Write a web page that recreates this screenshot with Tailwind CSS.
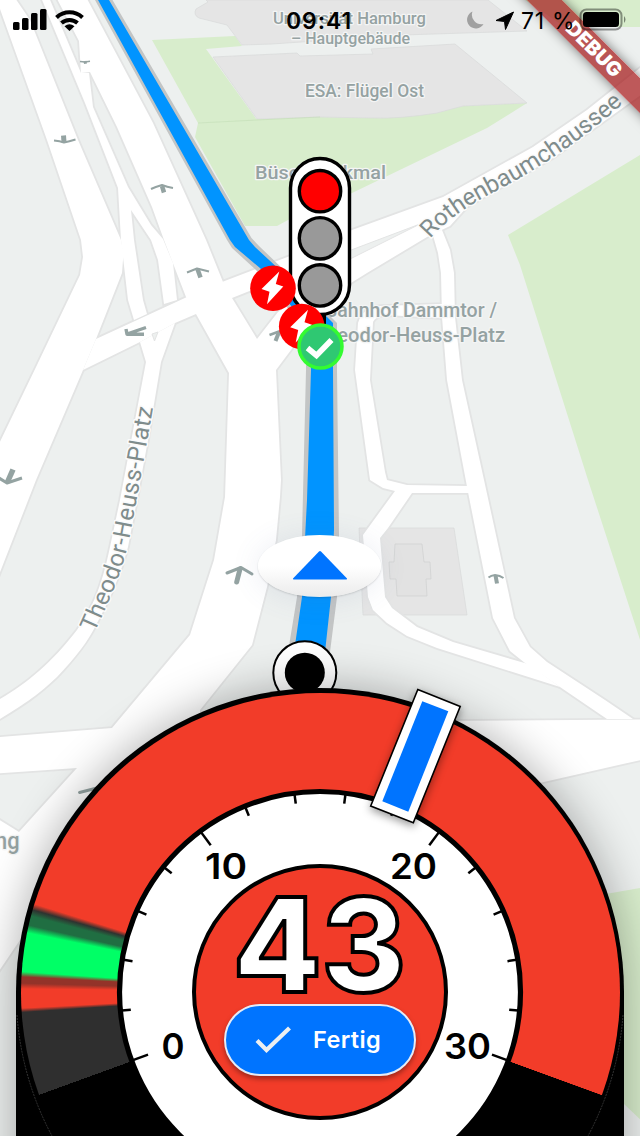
<!DOCTYPE html>
<html lang="de">
<head>
<meta charset="utf-8">
<title>Navigation</title>
<script src="https://cdn.jsdelivr.net/npm/@tailwindcss/browser@4"></script>
</head>
<body class="bg-[#edefef]">
<main class="relative h-[1136px] w-[640px] overflow-hidden bg-[#edf0ef] font-['Inter',sans-serif]">

  <!-- Map -->
  <svg class="absolute inset-0" width="640" height="1136" viewBox="0 0 640 1136">
    <defs>
      <g id="roads">
        <polygon points="-5,-5 13,-5 30,20 78,140 121,240 123.500,253 122,273 96,339 83,370 36,480 -5,585 -5,452 37,365 80,275 83,257 81,240 47,140"/>
        <polygon points="96,339 187,297 222,282 290,256 352,230 443,197 533,147 587,110 645,64 645,92 553,158 467,207 450,226 427,237 367,273 330,296 296,296 252,290 232,298 196,314 175,323 140,342 83,370"/>
        <polygon points="40,-5 48,-5 81,73 89,73 93,107 128,187 151,225 163,239 173,263 177,300 164,304 158,260 151,240 131,210 134,240 143,300 147,314 134,320 128,300 121,240 118,188 85,103"/>
        <polygon points="55,-5 79,41 81,73 90,72 117,127 152,207 164,240 186,297 196,314 229,373 225,497 214,560 190,635 112,728 -5,737.500 -5,773.500 77,768 19,832 -5,817 -5,977 20,940 200,900 200,710 252,645 267,587 276,540 280,497 281,480 276,370 300,338 310,290 278,312 257,339 232,298 223,282 206,240 153,123 85,-5"/>
        <path d="M140,342 146,362 120,500 110,547 C101,590 92,608 77,630 C50,665 25,685 -5,702 L-5,722 C25,704 38,695 57,677 C75,658 88,642 97,623 C108,603 119,580 128,547 L137,500 148,440 161,362 175,323Z"/>
        <polygon points="432,232 438,253 441,273 442,317 447,380 468,492 493,618 510,651 525,663 560,687 607,719 633,719 605,700 547,662 530,647 514,618 484,480 462,380 455,317 454,273 450,250 442,230"/>
        <path d="M358,323 355,370 370,480 383,488 395,491 363,535 368,597 373,610 387,623 407,636 437,648 560,687 528,664 453,642 417,627 392,608 385,597 380,538 388,528 412,493 470,493 468,486 407,485 387,480 385,472 370,380 373,322 Q375,317 384,315 L442,318 442,304 380,306 Q362,308 358,323Z"/>
        <polygon points="440,721 645,719.500 645,759 535,784 440,800"/>
      </g>
    </defs>

    <g fill="#d8edcc">
      <polygon points="152,40 235,36 242,46 206,49 257,120 198,123"/>
      <polygon points="198,123 257,119 320,117 373,118 437,111 463,106 527,103 487,128 352,193 288,220 277,226 245,226 195,137"/>
      <polygon points="508,235 645,152 645,655 588,480 520,265"/>
      <polygon points="525,0 640,0 640,27 565,27"/>
      <polygon points="600,895 645,887 645,1124 624,1104 600,1090"/>
    </g>
    <g fill="#e5e5e5" stroke="#d9dada" stroke-width=".7">
      <path d="M206,0 208,2 196,9 Q193,15 199,18 L227,25 242,45 272,44 403,35 527,31 488,0Z"/>
      <path d="M213,57 297,53 300,56 373,54 371,49 455,44 527,103 463,106 437,113 Q400,119 373,118 L320,117 257,119Z"/>
      <path d="M359,528 454,528 467,615 363,615Z"/>
      <path fill="#e2e2e2" stroke="#cfd0d0" d="M395,544 422,544 424,562 430,562 431,579 426,579 427,596 397,596 396,579 390,579 389,562 394,562Z"/>
    </g>
    <path d="M198,123 257,120 320,117" fill="none" stroke="#c5dfb9" stroke-width=".7"/>

    <use href="#roads" fill="#e3e4e4" stroke="#e3e4e4" stroke-width="3.600"/>
    <use href="#roads" fill="#fff"/>
    <polygon points="330,258 420,224 352,258 330,270" fill="#edf0ef" stroke="#e3e4e4"/>
    <path d="M152,334 158,332 154.500,341Z" fill="#edf0ef" stroke="#e3e4e4"/>

    <!-- One-way arrows -->
    <g fill="none" stroke="#94a3a2" stroke-linejoin="round">
      <path stroke-width="2" d="M54,140.500Q60,141 64,142.500Q69,141.500 75.500,139.500"/><path stroke-width="5" d="M63.500,135.500 64,142"/>
      <path stroke-width="1.400" d="M80,61.500 85,62 90,61.200"/><path stroke-width="3" d="M85,61 85.500,63.800"/>
      <path stroke-width="2" d="M151,189Q155,187 162,185Q167,187 173,188"/><path stroke-width="4.500" d="M164,192.500 162,186"/>
      <path stroke-width="2" d="M187,272.500 197,268.500 209,271.500"/><path stroke-width="4.500" d="M200.500,277.500 197.500,269"/>
      <path stroke-width="3.400" d="M126,329 127,334.300 144,334.300M127,334 146,327.500"/>
      <path stroke-width="2.600" d="M269.500,335 279,331.500 290,333"/><path stroke-width="4" d="M279,332 275.500,341"/>
      <path stroke-width="3" d="M-1,478 7,483 22,478"/><path stroke-width="5.500" d="M13,469.500 7.500,482"/>
      <path stroke-width="3" stroke-linecap="round" d="M227,573 241,567.500 252,574"/><path stroke-width="5" stroke-linecap="round" d="M236.700,582 240,569"/>
      <path stroke-width="2" d="M488.500,577.500Q491,575.500 495,575Q500,575.500 503.500,578"/><path stroke-width="4" d="M497,583.500 495.500,575.500"/>
      <path stroke-width="3" stroke-linecap="round" d="M79.500,792.500 97,788"/>
    </g>

    <!-- Map labels -->
    <g fill="#95a2a2" stroke="#f4f5f5" stroke-width="2.500" paint-order="stroke" stroke-linejoin="round" font-family="Roboto, sans-serif" font-size="16.500" font-weight="500">
      <text x="273" y="24" textLength="153" lengthAdjust="spacingAndGlyphs">Universität Hamburg</text>
      <text x="291" y="44" textLength="119" lengthAdjust="spacingAndGlyphs">– Hauptgebäude</text>
      <text x="305" y="97" font-size="17.500" textLength="119" lengthAdjust="spacingAndGlyphs">ESA: Flügel Ost</text>
      <text x="255" y="179" font-size="17.500" textLength="131" lengthAdjust="spacingAndGlyphs">Büschdenkmal</text>
      <text x="325" y="317" font-size="19.500" textLength="172" lengthAdjust="spacingAndGlyphs">Bahnhof Dammtor /</text>
      <text x="314" y="341.500" font-size="19.500" textLength="191" lengthAdjust="spacingAndGlyphs">Theodor-Heuss-Platz</text>
      <text x="-5" y="849" font-size="24" textLength="24.500" lengthAdjust="spacingAndGlyphs">ng</text>
    </g>
    <path id="rothen" fill="none" d="M430,239 C447,219 467,206 502,188 C546,164 586,137 627,100"/>
    <path id="heuss" fill="none" d="M94.500,633 C108,602 122,575 129,540 C137,498 145,455 154,402"/>
    <g fill="#7f8c8c" stroke="#fbfbfb" stroke-width="3" paint-order="stroke" stroke-linejoin="round" font-family="Roboto, sans-serif">
      <text font-size="24"><textPath href="#rothen" textLength="237" lengthAdjust="spacing">Rothenbaumchaussee</textPath></text>
      <text font-size="24"><textPath href="#heuss" textLength="234" lengthAdjust="spacing">Theodor-Heuss-Platz</textPath></text>
    </g>

    <!-- Route -->
    <path fill="#c3c5c5" d="M95,0 112.500,0 251.500,238 259,246 284,270 337,323 337,370 339,535 337,597 330,652 288,652 297,597 302,535 306,370 306,330 256,270 232,248 227,240Z"/>
    <path fill="#0194ff" d="M98,0 109,0 249,240 255,247 282,272 333,323 333,370 334,530 331,597 325,652 294,652 302,597 307,500 311,370 311,330 260,268 235,247 230,240Z"/>

    <!-- Traffic light -->
    <path d="M323,312v14" stroke="#000" stroke-width="6"/>
    <rect x="290.500" y="158.500" width="59" height="156" rx="29.500" fill="#fff" stroke="#000" stroke-width="3.400"/>
    <g stroke="#000" stroke-width="3.400">
      <circle cx="320" cy="191.200" r="20.700" fill="#f00"/>
      <circle cx="320" cy="238.300" r="20.700" fill="#999"/>
      <circle cx="320" cy="285.400" r="20.700" fill="#999"/>
    </g>

    <!-- Hazard and confirmation badges -->
    <g>
      <circle cx="273" cy="288.300" r="22.800" fill="#f00"/>
      <path fill="#fff" d="M279.300,271.500 261.500,289 269.500,291.700 267,304.300 283.300,286.500 275.800,284Z"/>
      <circle cx="301.700" cy="326.500" r="22.800" fill="#f00"/>
      <path fill="#fff" d="M308,309.700 290.200,327.200 298.200,329.900 295.700,342.500 312,324.700 304.500,322.200Z"/>
      <circle cx="320.500" cy="346.500" r="21.500" fill="#2fc872" stroke="#34fb31" stroke-width="3.500"/>
      <path d="M307.500,348 316.500,355.500 331.500,340" fill="none" stroke="#fff" stroke-width="5.600"/>
    </g>

    <!-- Start waypoint -->
    <circle cx="304.800" cy="672.700" r="31.500" fill="#fff" stroke="#000" stroke-width="2"/>
    <circle cx="304.800" cy="672.700" r="20" fill="#000"/>
  </svg>

  <!-- Current position -->
  <div class="absolute top-[535px] left-[258px] flex h-[62px] w-[123px] items-center justify-center rounded-[50%] bg-linear-to-b from-white from-50% to-[#ebebeb] shadow-[0_2px_30px_rgba(90,110,160,0.12),0_1px_2px_rgba(0,0,0,0.15)]">
    <svg class="-mt-0.5" width="56" height="30" viewBox="0 0 56 30"><path d="M27,1.500Q28,.5 29,1.500L55,28.500Q55.500,29.500 54,29.500H2Q.5,29.500 1,28.500Z" fill="#0074ff"/></svg>
  </div>

  <!-- Speed dial -->
  <section class="absolute top-[688px] left-4 h-[620px] w-[608px] rounded-t-[304px] bg-black shadow-[0_0_46px_rgba(0,0,0,0.32)]">
    <div class="mx-auto mt-[4.500px] size-[599px] rounded-full bg-[conic-gradient(from_250deg,#2f2f2f_0deg,#2f2f2f_16.200deg,#f23c29_17deg,#f23c29_20.700deg,#933329_21.800deg,#933329_23deg,#00ff66_24deg,#00ff66_31.500deg,#206e42_33deg,#206e42_34.800deg,#2f3330_36deg,#f23c29_37.200deg,#f23c29_220deg,#000_220.100deg)]"></div>
  </section>
  <svg class="absolute inset-0" width="640" height="1136" viewBox="0 0 640 1136">
    <path d="M16,992h4v144h-4zM620,992h4v144h-4z" fill="#000"/>
    <path d="M17,1015A304,304 0 0 0 52,1136M623,1015A304,304 0 0 1 588,1136" fill="none" stroke="#555" stroke-width=".6" stroke-dasharray="2 1"/>
    <circle cx="320" cy="992" r="200.500" fill="#fff" stroke="#000" stroke-width="5.200"/>
    <g id="ticks" stroke="#000" stroke-width="2.500"></g>
    <circle cx="320" cy="992" r="126" fill="#f23c29" stroke="#000" stroke-width="4"/>
    <g font-size="35.500" font-weight="600" fill="#000">
      <text x="205" y="879" textLength="42" lengthAdjust="spacingAndGlyphs">10</text>
      <text x="390" y="879" textLength="47" lengthAdjust="spacingAndGlyphs">20</text>
      <text x="161.500" y="1059" textLength="23" lengthAdjust="spacingAndGlyphs">0</text>
      <text x="444" y="1059" textLength="47" lengthAdjust="spacingAndGlyphs">30</text>
    </g>
    <text x="233" y="992" font-size="130" font-weight="800" fill="#fff" stroke="#000" stroke-width="4" textLength="173" lengthAdjust="spacingAndGlyphs">43</text>
    <!-- Phase pointer -->
    <polygon class="drop-shadow-[0_3px_4px_rgba(0,0,0,0.4)]" points="417.800,689.500 460.200,706.500 413.300,822.800 370.700,806" fill="#fff" stroke="#000" stroke-width="1.600"/>
    <polygon points="422.300,701.300 448.300,711.300 408.300,811.700 382.300,801.300" fill="#0074ff"/>
  </svg>

  <!-- Finish button -->
  <button class="absolute top-[1004px] left-[224px] flex h-[72px] w-48 items-center rounded-full border-2 border-[#e6ebf5] bg-[#0074ff] pl-[28px] text-white shadow-[0_3px_5px_rgba(0,0,0,0.35)]">
    <svg width="38" height="28" viewBox="0 0 38 28"><path d="M3,14.500 12.500,24 35.500,2" fill="none" stroke="#eceff1" stroke-width="4.200"/></svg>
    <span class="ml-[21px] text-[23.500px] leading-8 font-semibold tracking-[0.35px]">Fertig</span>
  </button>

  <!-- Debug ribbon -->
  <div class="absolute top-[37px] left-[454px] flex h-[24.500px] w-[280px] rotate-45 items-center justify-center bg-[#a31214]/70 shadow-[0_0_12px_rgba(0,0,0,0.5)]">
    <span class="text-[20px] leading-6 font-black text-white">DEBUG</span>
  </div>

  <!-- Status bar -->
  <header class="relative flex h-10 items-center text-black">
    <svg class="ml-3" width="74" height="26" viewBox="0 0 74 26">
      <rect x="1" y="15" width="6.500" height="8" rx="1.500"/><rect x="10" y="11" width="6.500" height="12" rx="1.500"/><rect x="19" y="6" width="6.500" height="17" rx="1.500"/><rect x="28" y="2" width="6.500" height="21" rx="1.500"/>
      <g fill="none" stroke="#000" stroke-width="4"><path d="M44.500,10.500A19,19 0 0 1 70.500,10.500"/><path d="M49.500,16A12,12 0 0 1 65.500,16"/></g>
      <path d="M57.500,24 52.500,19.200Q57.500,15.200 62.500,19.200Z"/>
    </svg>
    <span class="mt-0.5 ml-[200px] w-[68px] text-[23px] leading-7 font-semibold tracking-[0.9px] whitespace-nowrap">09:41</span>
    <div class="flex flex-1 items-center">
      <svg class="ml-[110px] shrink-0" width="22" height="22" viewBox="0 0 22 22"><path d="M8.500,2.500A8.800,8.800 0 1 0 19.500,15A9.500,9.500 0 0 1 8.500,2.500Z" fill="#a0a0a0"/></svg>
      <svg class="ml-2 shrink-0" width="21" height="21" viewBox="0 0 21 21"><path d="M19.500,2 11.500,19.500 10.500,11.500 2,10.500Z" stroke="#000" stroke-linejoin="round"/></svg>
      <span class="mt-0.5 ml-1.5 w-[58px] text-[23px] leading-7 tracking-[0.7px] whitespace-nowrap">71 %</span>
      <svg class="shrink-0" width="50" height="24" viewBox="0 0 50 24"><rect x="1.500" y="1.500" width="41" height="20" rx="6" fill="none" stroke="#000" stroke-opacity=".4" stroke-width="2"/><rect x="4" y="4" width="36" height="15" rx="3.500"/><path d="M45,8Q48,11.500 45,15Z" fill="#000" fill-opacity=".45"/></svg>
    </div>
  </header>
</main>
<script>
  // 16 ticks over a 220° sweep; every fifth one is long
  const g = document.getElementById('ticks');
  for (let i = 0; i <= 15; i++) {
    const a = (160 + i * 220 / 15) * Math.PI / 180;
    const r = i % 5 ? 190 : 183;
    const l = document.createElementNS('http://www.w3.org/2000/svg', 'line');
    l.setAttribute('x1', 320 + 199 * Math.cos(a));
    l.setAttribute('y1', 992 + 199 * Math.sin(a));
    l.setAttribute('x2', 320 + r * Math.cos(a));
    l.setAttribute('y2', 992 + r * Math.sin(a));
    g.appendChild(l);
  }
</script>
</body>
</html>
